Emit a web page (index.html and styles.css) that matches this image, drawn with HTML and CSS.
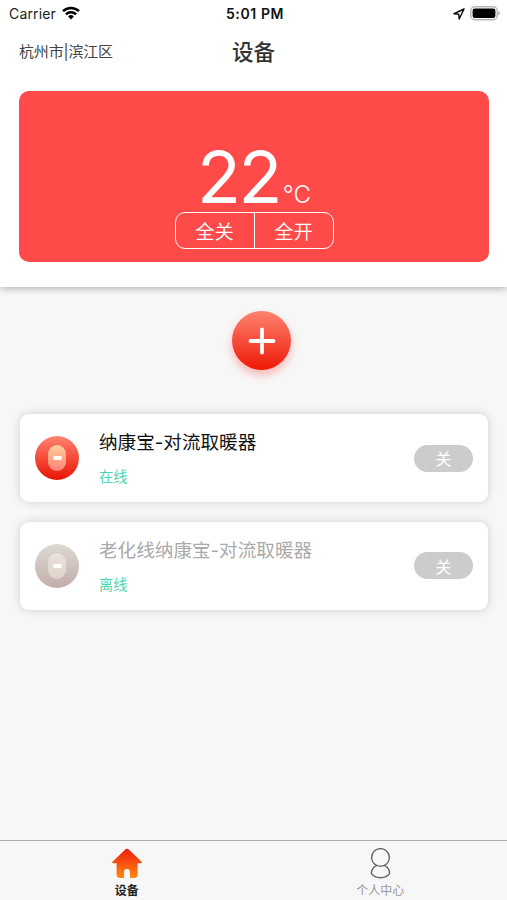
FILE: index.html
```
<!DOCTYPE html>
<html lang="zh-CN">
<head>
    <meta charset="UTF-8">
    <meta name="viewport" content="width=device-width, initial-scale=1.0">
    <title>设备</title>
    <link rel="stylesheet" href="styles.css">
</head>
<body>
    <header class="top">
        <div class="status-bar">
            <div class="carrier">
                <span>Carrier</span>
                <svg width="18" height="14" viewBox="0 0 18 14" fill="none" stroke="#000" stroke-width="2.5">
                    <path d="M1 5.2a11.4 11.4 0 0 1 16 0"/>
                    <path d="M3.9 8.3a7.2 7.2 0 0 1 10.2 0"/>
                    <path d="M9 13.5 6.1 10.5a4.2 4.2 0 0 1 5.8 0z" fill="#000" stroke="none"/>
                </svg>
            </div>
            <div class="time">5:01 PM</div>
            <div class="power">
                <svg width="12" height="12" viewBox="0 0 12 12" fill="none" stroke="#111" stroke-width="1.5" stroke-linejoin="round">
                    <path d="M11 1 1 5.7l4.7.6.5 4.7z"/>
                </svg>
                <svg width="31" height="15" viewBox="0 0 31 15">
                    <rect x=".8" y=".8" width="26.4" height="13" rx="4" fill="#fff" stroke="#b5b5b5" stroke-width="1.4"/>
                    <rect x="2.6" y="2.6" width="22.8" height="9.4" rx="2.2" fill="#000"/>
                    <path d="M28.3 5v4.6q1.6-.8 1.6-2.3t-1.6-2.3z" fill="#aaa"/>
                </svg>
            </div>
        </div>
        <div class="title-bar">
            <span class="location">杭州市|滨江区</span>
            <h1>设备</h1>
        </div>
        <div class="weather">
            <div class="temp">22<span class="unit">°C</span></div>
            <div class="switches">
                <button type="button">全关</button>
                <button type="button">全开</button>
            </div>
        </div>
    </header>

    <main>
        <button type="button" class="add" aria-label="添加设备">
            <svg width="28" height="28" viewBox="0 0 28 28" stroke="#fff" stroke-width="3.8" stroke-linecap="round">
                <path d="M14 2.5v23M2.5 14h23"/>
            </svg>
        </button>

        <div class="device">
            <div class="device-icon"><span></span></div>
            <div class="device-info">
                <div class="name">纳康宝-对流取暖器</div>
                <div class="state">在线</div>
            </div>
            <button type="button" class="toggle">关</button>
        </div>
        <div class="device offline">
            <div class="device-icon"><span></span></div>
            <div class="device-info">
                <div class="name">老化线纳康宝-对流取暖器</div>
                <div class="state">离线</div>
            </div>
            <button type="button" class="toggle">关</button>
        </div>
    </main>

    <nav class="tabs">
        <a class="tab active">
            <svg width="32" height="31" viewBox="0 0 32 31">
                <defs>
                    <linearGradient id="home" x1="0" y1="0" x2="0" y2="1">
                        <stop offset="0" stop-color="#ef1c0c"/>
                        <stop offset="1" stop-color="#ff8a12"/>
                    </linearGradient>
                </defs>
                <path fill="url(#home)" d="M14.8 1.1q1.2-.9 2.4 0L30.3 13.4q1.3 1.8-.9 1.9H26.6V26.5q0 3.5-3.5 3.5H19V24q0-3-3-3t-3 3v6H9.1q-3.5 0-3.5-3.5V15.3H2.6q-2.2-.1-.9-1.9z"/>
            </svg>
            <span>设备</span>
        </a>
        <a class="tab">
            <svg width="32" height="31" viewBox="0 0 32 31" fill="none" stroke="#666" stroke-width="1.4">
                <circle cx="16.5" cy="9.5" r="8.9"/>
                <path d="M12.3 17.7c-3 1.500-4.900 4.300-4.900 7.700 2 3 5.600 4.300 9.100 4.300s7.100-1.300 9.100-4.300c0-3.400-1.900-6.200-4.900-7.700"/>
            </svg>
            <span>个人中心</span>
        </a>
    </nav>
</body>
</html>
```
FILE: styles.css
```
* {
    box-sizing: border-box;
}
body {
    margin: 0;
    height: 100vh;
    display: flex;
    flex-direction: column;
    background-color: #f7f7f7;
    font-family: Inter, "Noto Sans CJK SC", sans-serif;
    color: #111;
}
button {
    font-family: inherit;
    padding: 0;
    border: none;
    background: none;
    color: #fff;
}
svg {
    display: block;
    flex-shrink: 0;
}
.top {
    height: 287px;
    background-color: #fff;
    box-shadow: 0 1px 8px rgba(0, 0, 0, 0.32);
}
.status-bar {
    display: grid;
    grid-template-columns: 1fr auto 1fr;
    align-items: center;
    height: 27px;
    padding: 0 6px 0 9px;
    font-size: 14px;
    line-height: 27px;
}
.carrier {
    display: flex;
    align-items: center;
    gap: 6px;
    letter-spacing: 0.15px;
    color: #222;
}
.carrier svg {
    margin-top: -2px;
}
.time {
    font-weight: 600;
    letter-spacing: 0.6px;
}
.power {
    display: flex;
    justify-content: flex-end;
    align-items: center;
    gap: 5px;
}
.title-bar {
    display: grid;
    grid-template-columns: 1fr auto 1fr;
    align-items: center;
    height: 47px;
    padding: 0 19px;
}
.location {
    font-size: 15px;
    letter-spacing: -0.15px;
    color: #444;
}
h1 {
    margin: 0;
    font-size: 21.5px;
    font-weight: 500;
    color: #333;
}
.weather {
    display: flex;
    flex-direction: column;
    align-items: center;
    height: 171px;
    margin: 17px 18px 0 19px;
    padding-top: 50px;
    border-radius: 10px;
    background-color: #ff4a4a;
    color: #fff;
}
.temp {
    height: 71px;
    font-size: 72px;
    line-height: 71px;
    letter-spacing: -2.5px;
}
.unit {
    margin-left: 3px;
    font-size: 24px;
    font-weight: 300;
    letter-spacing: 0;
}
.switches {
    display: flex;
    width: 159px;
    height: 37px;
    border: 1.5px solid #fff;
    border-radius: 10px;
}
.switches button {
    flex: 1;
    font-size: 19.3px;
    font-weight: 350;
}
.switches button + button {
    border-left: 1px solid #fff;
}
main {
    flex: 1;
    display: flex;
    flex-direction: column;
    padding: 24px 19px 0 20px;
}
.add {
    display: flex;
    justify-content: center;
    align-items: center;
    width: 59px;
    height: 59px;
    margin: 0 0 44px 212px;
    border-radius: 50%;
    background: linear-gradient(#ff8370, #ee1705);
    box-shadow: 0 5px 9px rgba(255, 60, 60, 0.35);
}
.device {
    display: flex;
    align-items: center;
    height: 88px;
    margin-bottom: 19.5px;
    padding: 0 15px;
    border-radius: 9px;
    background-color: #fff;
    box-shadow: 0 0 10px rgba(0, 0, 0, 0.17);
}
.device-icon {
    display: flex;
    justify-content: center;
    align-items: center;
    width: 44px;
    height: 44px;
    margin-right: 20px;
    border-radius: 50%;
    background: linear-gradient(#ff8370, #e91405);
}
.device-icon span {
    display: flex;
    justify-content: center;
    align-items: center;
    width: 18px;
    height: 26px;
    border-radius: 9px;
    background: linear-gradient(#ffcf9c, #ff8274);
}
.device-icon span::after {
    content: "";
    width: 9px;
    height: 4px;
    border-radius: 2px;
    background-color: #fff;
}
.device-info {
    flex: 1;
}
.name {
    font-size: 18.6px;
    line-height: 28px;
}
.state {
    margin-top: 10px;
    font-size: 14.3px;
    line-height: 22px;
    color: #52d6ad;
}
.toggle {
    width: 59px;
    height: 27px;
    border-radius: 14px;
    background-color: #ccc;
    font-size: 16px;
}
.offline .device-icon {
    background: linear-gradient(#dcd9d1, #c2adab);
}
.offline .device-icon span {
    background: linear-gradient(#e9e3da, #ded3cc);
}
.offline .name {
    color: #aaa;
}
.tabs {
    display: flex;
    height: 60px;
    border-top: 1px solid #aaa;
}
.tab {
    flex: 1;
    display: flex;
    flex-direction: column;
    align-items: center;
    gap: 3px;
    padding-top: 7px;
    font-size: 12px;
    line-height: 18px;
    color: #999;
}
.tab.active {
    color: #222;
    font-weight: 700;
}
```
